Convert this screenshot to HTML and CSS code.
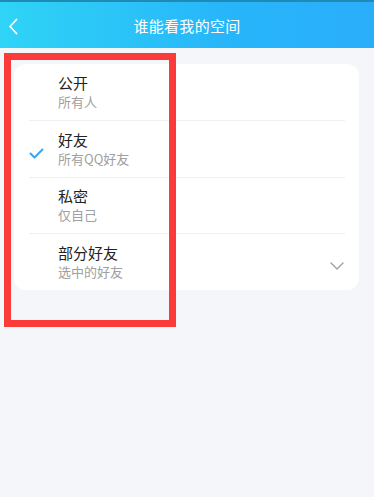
FILE: index.html
```html
<!DOCTYPE html>
<html lang="zh-CN">
<head>
    <meta charset="UTF-8">
    <meta name="viewport" content="width=device-width, initial-scale=1.0">
    <title>谁能看我的空间</title>
    <link rel="stylesheet" href="styles.css">
</head>
<body>

    <!-- 顶部标题栏 -->
    <div class="top-bar">
        <div class="back">
            <svg width="10" height="17" viewBox="0 0 10 17"><path d="M8.5 1.5 L2 8.5 L8.5 15.5" fill="none" stroke="#fff" stroke-width="1.8" stroke-linecap="round" stroke-linejoin="round"/></svg>
        </div>
        <div class="title">谁能看我的空间</div>
    </div>

    <!-- 权限选项 -->
    <div class="card">
        <div class="option">
            <div class="check"></div>
            <div class="text">
                <div class="name">公开</div>
                <div class="desc">所有人</div>
            </div>
        </div>
        <div class="option tall">
            <div class="check">
                <svg width="15" height="11" viewBox="0 0 15 11"><path d="M1.5 5.5 L5.5 9.5 L13.5 1.5" fill="none" stroke="#3aa6ee" stroke-width="2" stroke-linecap="round" stroke-linejoin="round"/></svg>
            </div>
            <div class="text">
                <div class="name">好友</div>
                <div class="desc">所有QQ好友</div>
            </div>
        </div>
        <div class="option">
            <div class="check"></div>
            <div class="text">
                <div class="name">私密</div>
                <div class="desc">仅自己</div>
            </div>
        </div>
        <div class="option tall">
            <div class="check"></div>
            <div class="text">
                <div class="name">部分好友</div>
                <div class="desc">选中的好友</div>
            </div>
            <div class="arrow">
                <svg width="14" height="8" viewBox="0 0 14 8"><path d="M1 1 L7 7 L13 1" fill="none" stroke="#a0a0a0" stroke-width="1.4" stroke-linecap="round" stroke-linejoin="round"/></svg>
            </div>
        </div>
    </div>

    <!-- 红色标注框 -->
    <div class="mark"></div>

</body>
</html>
```

FILE: styles.css
```css
body {
    margin: 0;
    font-family: "Noto Sans CJK SC", "Noto Sans", sans-serif;
    background-color: #f5f6fa;
    width: 374px;
    height: 497px;
    position: relative;
    overflow: hidden;
}
.top-bar {
    height: 46px;
    border-top: 2px solid #1d8bb3;
    background: linear-gradient(to right, #2fd4f6, #27b6f9 60%, #2aaefb);
    display: flex;
    align-items: center;
    justify-content: center;
    position: relative;
}
.back {
    position: absolute;
    left: 8px;
    top: 16px;
    line-height: 0;
}
.title {
    color: #fff;
    font-size: 15px;
    letter-spacing: 0.3px;
}
.card {
    margin: 16px 15px 0 14px;
    background-color: #fff;
    border-radius: 12px;
}
.option {
    height: 56px;
    display: flex;
    align-items: center;
    position: relative;
}
.option.tall {
    height: 57px;
}
.option + .option::before {
    content: "";
    position: absolute;
    top: 0;
    left: 15px;
    right: 14px;
    border-top: 1px solid #eeeff1;
}
.check {
    width: 44px;
    padding-left: 15px;
    box-sizing: border-box;
    line-height: 0;
    margin-top: 10px;
}
.text {
    flex: 1;
}
.name {
    font-size: 15px;
    color: #222;
    line-height: 20px;
}
.desc {
    font-size: 13px;
    color: #a0a0a0;
    line-height: 18px;
}
.arrow {
    margin-right: 15px;
    margin-top: 8px;
    line-height: 0;
}
.mark {
    position: absolute;
    left: 4px;
    top: 53px;
    width: 158px;
    height: 260px;
    border: 7px solid #fb3a3a;
}
```
